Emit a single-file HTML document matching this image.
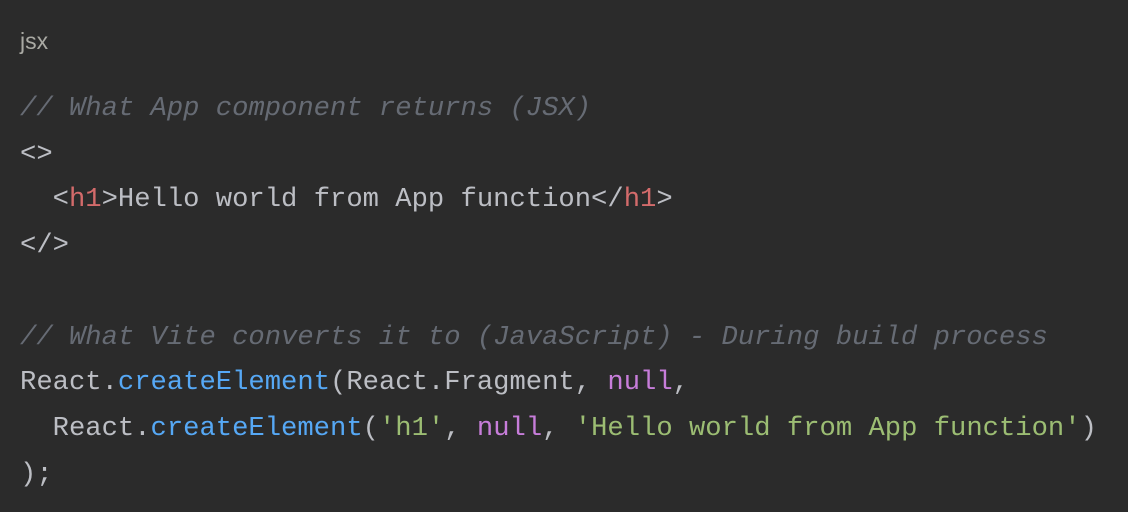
<!DOCTYPE html>
<html><head><style>
html,body{margin:0;padding:0;background:#2b2b2b;width:1128px;height:512px;overflow:hidden}
.lbl{position:absolute;left:20px;top:28px;font:23px "Liberation Sans",sans-serif;color:#a9a9a3}
pre{position:absolute;left:20px;top:86px;margin:0;font:27.2px/45.7px "Liberation Mono",monospace;color:#bcbec4}
.c{color:#666b74;font-style:italic}
.t{color:#d36b6b}
.f{color:#56a8f5}
.k{color:#c77dda}
.s{color:#9cbd73}
</style></head><body>
<div class="lbl">jsx</div>
<pre><span class="c">// What App component returns (JSX)</span>
&lt;&gt;
  &lt;<span class="t">h1</span>&gt;Hello world from App function&lt;/<span class="t">h1</span>&gt;
&lt;/&gt;

<span class="c">// What Vite converts it to (JavaScript) - During build process</span>
React.<span class="f">createElement</span>(React.Fragment, <span class="k">null</span>,
  React.<span class="f">createElement</span>(<span class="s">'h1'</span>, <span class="k">null</span>, <span class="s">'Hello world from App function'</span>)
);</pre>
</body></html>
